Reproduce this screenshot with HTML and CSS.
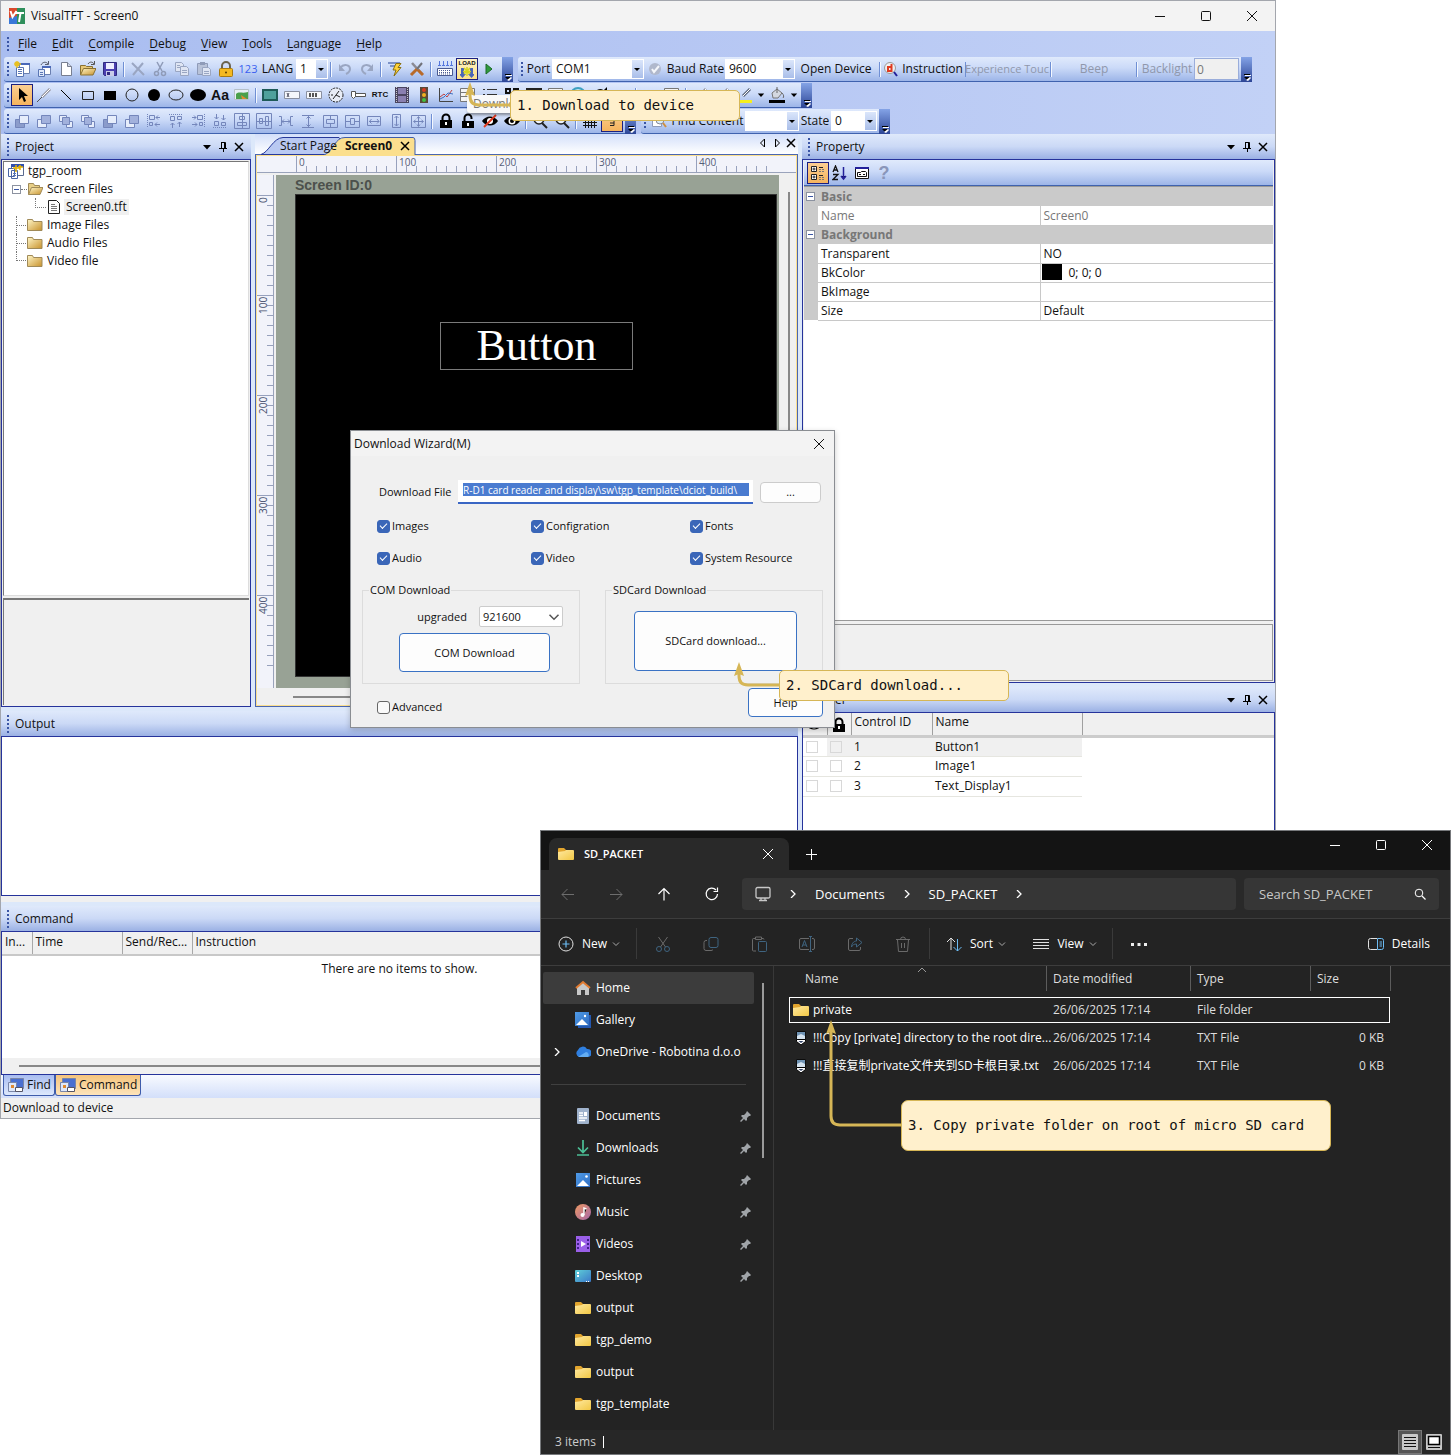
FILE: index.html
```html
<!DOCTYPE html>
<html lang="en">
<head>
<meta charset="utf-8">
<meta name="viewport" content="width=device-width, initial-scale=1">
<title>VisualTFT - Screen0</title>
<link rel="stylesheet" href="styles.css">
</head>
<body>
<svg class="sprite" aria-hidden="true">
  <defs>
    <linearGradient id="gFolder" x1="0" y1="0" x2="1" y2="1"><stop offset="0" stop-color="#ffe9a0"/><stop offset="1" stop-color="#f2c744"/></linearGradient>
    <linearGradient id="gBlue" x1="0" y1="0" x2="1" y2="1"><stop offset="0" stop-color="#4f9be8"/><stop offset="1" stop-color="#2f6cc0"/></linearGradient>
    <linearGradient id="gMusic" x1="0" y1="0" x2="1" y2="1"><stop offset="0" stop-color="#ee9a63"/><stop offset="1" stop-color="#a566a8"/></linearGradient>
    <linearGradient id="gDesk" x1="0" y1="0" x2="1" y2="1"><stop offset="0" stop-color="#5fd0d8"/><stop offset="1" stop-color="#3b78c8"/></linearGradient>
    <linearGradient id="gOld" x1="0" y1="0" x2="1" y2="1"><stop offset="0" stop-color="#fff6c8"/><stop offset="1" stop-color="#c8922c"/></linearGradient>
  </defs>
  <symbol id="logo" viewBox="0 0 16 16"><path fill="#d9482b" d="M0 0h8v10H0z"/><path fill="#2f8f5b" d="M8 0h8v16H8z"/><path fill="#3a78d8" d="M0 10l8-2v8H0z"/><path fill="none" stroke="#fff" stroke-width="2" d="M1.500 3l2 6 4-6M6 5h9M11.500 5l-1.500 9"/></symbol>
  <symbol id="newproj" viewBox="0 0 16 16"><path fill="#fff" stroke="#6a7fb0" d="M5.500 2.500h10v10h-10z"/><path fill="#4a68b8" d="M5 2h11v2H5z"/><path fill="#fff" stroke="#5a76b4" d="M2.500 6.500h7v9h-7z"/><path stroke="#5a76b4" d="M4 8.500h4M4 10.500h4M4 12.500h4"/><path stroke="#e8c020" stroke-width="1.500" d="M3 0v7M0 3h7M1 1l4 4M5 1L1 5"/></symbol>
  <symbol id="newwin" viewBox="0 0 16 16"><path fill="#fff" stroke="#6a7fb0" d="M6.500 6.500h8v7h-8z"/><path fill="#4a68b8" d="M6 5h9v2H6z"/><path fill="#dfe8fa" stroke="#5a76b4" d="M2.500 8.500h6v7h-6z"/><path stroke="#5a76b4" d="M4 11.500h3M4 13.500h3"/><path fill="none" stroke="#5a5f70" d="M5 4c2-4 6-3 7-1M12.500 0v3.500H9"/></symbol>
  <symbol id="page" viewBox="0 0 16 16"><path fill="#fff" stroke="#777e90" d="M3.500 1.500h6l4 4v9h-10z"/><path fill="#cfd6e6" stroke="#777e90" d="M9.500 1.500v4h4"/></symbol>
  <symbol id="open" viewBox="0 0 16 16"><path fill="#e7c877" stroke="#8a7233" d="M.500 13.500v-9h5l1 1h6v3"/><path fill="url(#gOld)" stroke="#8a7233" d="M.500 14l3-6.500H16L13 14z"/><path fill="none" stroke="#555" d="M8 3c2-3 5-2 6 0M14.500 0v3.500H11"/></symbol>
  <symbol id="save" viewBox="0 0 16 16"><path fill="#4a3fb0" stroke="#302a80" d="M1.500 1.500h13v13h-12l-1-1z"/><path fill="#eef" d="M4 2h8v6H4z"/><path fill="#c8cbe8" d="M4 10h8v5H4z"/><path fill="#302a80" d="M5 11h3v3H5z"/></symbol>
  <symbol id="del" viewBox="0 0 16 16"><path fill="none" stroke="#9aa6c2" stroke-width="2" d="M2 2l12 12M13 2L3 14"/></symbol>
  <symbol id="scis" viewBox="0 0 16 16"><path fill="none" stroke="#8f9bb8" stroke-width="1.500" d="M5 1l5 9M11 1L6 10"/><circle cx="4.500" cy="12.500" r="2" fill="none" stroke="#8f9bb8" stroke-width="1.500"/><circle cx="11.500" cy="12.500" r="2" fill="none" stroke="#8f9bb8" stroke-width="1.500"/></symbol>
  <symbol id="copy" viewBox="0 0 16 16"><path fill="#dfe5f3" stroke="#9aa6c2" d="M1.500 1.500h6l2 2v7h-8z"/><path fill="#dfe5f3" stroke="#9aa6c2" d="M6.500 5.500h6l2 2v7h-8z"/><path stroke="#9aa6c2" d="M8 9.500h5M8 11.500h5M3 4.500h3M3 6.500h3"/></symbol>
  <symbol id="paste" viewBox="0 0 16 16"><path fill="#b8c2d8" stroke="#8f9bb8" d="M1.500 2.500h10v11h-10z"/><path fill="#8f9bb8" d="M4 1h5v3H4z"/><path fill="#dfe5f3" stroke="#9aa6c2" d="M6.500 6.500h6l2 2v6h-8z"/><path stroke="#9aa6c2" d="M8 10.500h5M8 12.500h5"/></symbol>
  <symbol id="goldlock" viewBox="0 0 16 16"><path fill="none" stroke="#6b6450" stroke-width="2" d="M4 8V5a4 4 0 0 1 8 0v3"/><rect x="1.500" y="7.500" width="13" height="8" rx="1" fill="#f5b921" stroke="#a87a10"/><circle cx="8" cy="11.500" r="1" fill="#5a3c00"/></symbol>
  <symbol id="undo" viewBox="0 0 16 16"><path fill="none" stroke="#9aa6c2" stroke-width="2" d="M3 7c4-5 10-3 10 1 0 3-2 4-4 5"/><path fill="#9aa6c2" d="M2 3v7h6z"/></symbol>
  <symbol id="redo" viewBox="0 0 16 16"><path fill="none" stroke="#9aa6c2" stroke-width="2" d="M13 7c-4-5-10-3-10 1 0 3 2 4 4 5"/><path fill="#9aa6c2" d="M14 3v7H8z"/></symbol>
  <symbol id="bolt" viewBox="0 0 16 16"><path fill="none" stroke="#5f78b8" stroke-width="1.500" d="M1 2h12M3 5h6"/><path fill="#ffd23a" stroke="#8a7010" d="M9 2.500h5l-3 4h3L7 15l2-6H6z"/></symbol>
  <symbol id="tools" viewBox="0 0 16 16"><path stroke="#8a8a94" stroke-width="2.500" d="M3 2l10 11"/><path stroke="#b86a2a" stroke-width="3" d="M2 14l6-6M9 9l5 5"/><path stroke="#70727a" stroke-width="2" d="M8 8l5-6"/></symbol>
  <symbol id="compile" viewBox="0 0 16 16"><path fill="#fff" stroke="#4a5a90" d="M.500 7.500h15v7H.500z"/><path stroke="#4a5a90" stroke-dasharray="1 1" d="M2 9.500h12M2 11.500h12M2 13h12"/><path stroke="#5577dd" d="M2.500 0v5M6.500 0v5M10.500 0v5M14.500 0v5M1 4.500h3M5 4.500h3M9 4.500h3M13 4.500h3"/></symbol>
  <symbol id="load" viewBox="2 6 14 12"><path fill="#4a66b8" d="M3 7h3v6h2l-3.500 4L1 13h2zM12 7h3v6h2l-3.500 4-3.500-4h2z"/><path stroke="#d4d420" stroke-width="1.500" d="M9 6v9M5 10.500h8M6 7l6 6M12 7l-6 6"/></symbol>
  <symbol id="play" viewBox="0 0 16 16"><path fill="#2f9a3c" stroke="#1d6b28" d="M5 3l6 5-6 5z"/></symbol>
  <symbol id="okball" viewBox="0 0 16 16"><circle cx="8" cy="8" r="6" fill="#b0b8cc"/><path fill="none" stroke="#f4f6fa" stroke-width="2" d="M5 8l2 3 5-6"/></symbol>
  <symbol id="redmag" viewBox="0 0 16 16"><circle cx="7" cy="7" r="5.500" fill="#f0eef0" stroke="#999"/><path stroke="#23209a" stroke-width="2" d="M11 11l3 4"/><path fill="none" stroke="#e03a20" stroke-width="2" d="M8.500 3v8M8 6H5v4h3"/></symbol>

  <symbol id="cursor" viewBox="0 0 16 16"><path d="M5 1v12l3-3 2 5 2-1-2-5h4z"/></symbol>
  <symbol id="pen" viewBox="0 0 16 16"><path stroke="#9a9aa4" stroke-width="3" d="M6 10l8-8"/><path stroke="#fff" d="M6 10l8-8"/><path stroke="#555" d="M1 15l5-5"/></symbol>
  <symbol id="line" viewBox="0 0 16 16"><path stroke="#000" d="M3 3l10 10"/></symbol>
  <symbol id="rect" viewBox="0 0 16 16"><path fill="none" stroke="#222" d="M2.500 4.500h11v8h-11z"/></symbol>
  <symbol id="rectf" viewBox="0 0 16 16"><path d="M2 4h12v9H2z"/></symbol>
  <symbol id="circ" viewBox="0 0 16 16"><circle cx="8" cy="8" r="6" fill="none" stroke="#222"/></symbol>
  <symbol id="circf" viewBox="0 0 16 16"><circle cx="8" cy="8" r="6"/></symbol>
  <symbol id="ell" viewBox="0 0 16 16"><ellipse cx="8" cy="8" rx="7" ry="5" fill="none" stroke="#222"/></symbol>
  <symbol id="ellf" viewBox="0 0 16 16"><ellipse cx="8" cy="8" rx="8" ry="6"/></symbol>
  <symbol id="img" viewBox="0 0 16 16"><path fill="#e8f0f4" stroke="#b5c0c8" d="M.500 2.500h14v10H.500z"/><path fill="#4aa04a" d="M2 7c3-3 6 0 12-2v7H2z"/><path fill="#e08a30" d="M7 8l6 4H8z"/></symbol>
  <symbol id="teal" viewBox="0 0 16 16"><path fill="#4fa09c" stroke="#1e5a58" stroke-width="2" d="M1 3h14v10H1z"/></symbol>
  <symbol id="edit" viewBox="0 0 16 16"><path fill="#f6f8fc" stroke="#8a90a0" d="M.500 4.500h15v7H.500z"/><path stroke="#556" d="M3 6l2 4M5 6l-2 4"/></symbol>
  <symbol id="bars" viewBox="0 0 16 16"><path fill="#f6f8fc" stroke="#8a90a0" d="M.500 4.500h15v7H.500z"/><path stroke="#555" stroke-width="2" d="M4 6v4M7 6v4M10 6v4"/></symbol>
  <symbol id="clock" viewBox="0 0 16 16"><circle cx="8" cy="8" r="7" fill="#e8edf6" stroke="#222" stroke-dasharray="2 1"/><path stroke="#222" d="M5 12l6-8M8 8l4 2M3 8h2"/></symbol>
  <symbol id="slider" viewBox="0 0 16 16"><path fill="#fff" stroke="#555" d="M5.500 6.500h10v3h-10zM1.500 4.500h4v5l-2 2-2-2z"/></symbol>
  <symbol id="film" viewBox="0 0 16 16"><path fill="#4a4560" d="M1 0h14v16H1z"/><path fill="#8a80b0" d="M4 1h8v6H4zM4 9h8v6H4z"/><path stroke="#ccc" stroke-dasharray="1 1" d="M2.500 0v16M13.500 0v16"/></symbol>
  <symbol id="traffic" viewBox="0 0 16 16"><rect x="4" y="0" width="8" height="16" fill="#5a4a38"/><circle cx="8" cy="3" r="2" fill="#d83a20"/><circle cx="8" cy="8" r="2" fill="#f0b020"/><circle cx="8" cy="13" r="2" fill="#40c040"/></symbol>
  <symbol id="chart" viewBox="0 0 16 16"><path fill="none" stroke="#444" d="M1.500 1v13.500H15"/><path fill="none" stroke="#c04040" d="M2 10l4-3 3 3 5-7"/><path fill="none" stroke="#4070c0" d="M2 12l4-2 4-4 5 1"/></symbol>
  <symbol id="listbox" viewBox="0 0 16 16"><path fill="#f4f4f4" stroke="#777" d="M.500 1.500h14v13H.500z"/><path stroke="#777" d="M1 5.500h13M1 9.500h13"/></symbol>
  <symbol id="lines" viewBox="0 0 16 16"><path stroke="#333" d="M5 2.500h10M5 7.500h10M5 12.500h10M1 2.500h2M1 7.500h2M1 12.500h2"/></symbol>
  <symbol id="qr" viewBox="0 0 16 16"><path fill="none" stroke="#111" stroke-width="2" d="M2 2h4v4H2zM10 2h4v4h-4zM2 10h4v4H2z"/><path stroke="#111" stroke-dasharray="2 1" d="M9 9.500h6M9 12.500h6"/></symbol>
  <symbol id="darkbox" viewBox="0 0 16 16"><path fill="none" stroke="#222" stroke-width="2" d="M1 2h14v12H1zM8 2v12"/></symbol>
  <symbol id="globe" viewBox="0 0 16 16"><circle cx="8" cy="8" r="7" fill="#bfe4f0" stroke="#3fa0c0" stroke-width="2"/></symbol>
  <symbol id="rot" viewBox="0 0 16 16"><path fill="none" stroke="#111" stroke-width="2" d="M13 9a5 5 0 1 1-2-5"/><path d="M10 5h5V0z"/></symbol>
  <symbol id="mark" viewBox="0 0 16 16"><path stroke="#5f6a80" stroke-width="3" d="M7 9l7-7"/><path stroke="#fff" d="M7 9l7-7"/><path stroke="#f6ee20" stroke-width="3" d="M2 14.500h14"/></symbol>
  <symbol id="bucket" viewBox="0 0 16 16"><path fill="#d4d8e0" stroke="#777" d="M3 6l5-4 5 4-4 5H4z"/><path fill="none" stroke="#666" d="M8 6V0M13 6c2 2 2 4 1 5"/><path stroke="#000" stroke-width="3" d="M0 14.500h16"/></symbol>

  <symbol id="lay1" viewBox="0 0 16 16"><path fill="#8b9ccb" stroke="#7486bb" d="M1.500 6.500h9v8h-9z"/><path fill="#e6edfb" stroke="#7486bb" d="M5.500 2.500h9v8h-9z"/></symbol>
  <symbol id="lay2" viewBox="0 0 16 16"><path fill="#e6edfb" stroke="#7486bb" d="M1.500 6.500h9v8h-9z"/><path fill="#a2b1dc" stroke="#7486bb" d="M5.500 2.500h9v8h-9z"/></symbol>
  <symbol id="lay3" viewBox="0 0 16 16"><path fill="#e6edfb" stroke="#7486bb" d="M1.500 2.500h7v6h-7zM8.500 8.500h6v6h-6z"/><path fill="#a2b1dc" stroke="#7486bb" d="M4.500 4.500h7v7h-7z"/></symbol>
  <symbol id="alL" viewBox="0 0 16 16"><path fill="none" stroke="#7486bb" d="M3.500 2.500h5v4h-5zM3.500 9.500h3v3h-3zM14 4.500h-4m2-2l-2 2 2 2M14 11.500H9m2-2l-2 2 2 2"/><path stroke="#7486bb" stroke-dasharray="1 1" d="M1.500 1v14"/></symbol>
  <symbol id="alT" viewBox="0 0 16 16"><path fill="none" stroke="#7486bb" d="M2.500 3.500h4v4h-4zM9.500 3.500h4v3h-4zM4.500 15v-5m-2 2l2-2 2 2M11.500 14V9m-2 2l2-2 2 2"/><path stroke="#7486bb" stroke-dasharray="1 1" d="M1 1.500h14"/></symbol>
  <symbol id="cenH" viewBox="0 0 16 16"><path fill="none" stroke="#7486bb" d="M.500.500h15v15H.500zM5.500 3.500h5v3h-5zM3.500 9.500h9v3h-9zM8.500 1v14"/></symbol>
  <symbol id="cenV" viewBox="0 0 16 16"><path fill="none" stroke="#7486bb" d="M.500.500h15v15H.500zM3.500 5.500h3v5h-3zM9.500 3.500h3v9h-3zM1 8.500h14"/></symbol>
  <symbol id="spH" viewBox="0 0 16 16"><path fill="none" stroke="#7486bb" d="M1 3.500h2.500v9H1M15 3.500h-2.500v9H15M4 8.500h8M6 6.500l-2 2 2 2M10 6.500l2 2-2 2"/></symbol>
  <symbol id="spV" viewBox="0 0 16 16"><path fill="none" stroke="#7486bb" d="M2 2.500h12M2 14.500h12M8.500 3v11M6.500 5.500l2-2 2 2M6.500 11.500l2 2 2-2"/></symbol>
  <symbol id="boxV" viewBox="0 0 16 16"><path fill="none" stroke="#7486bb" d="M1.500 2.500h14v12h-14zM4.500 6.500h8v4h-8zM8.500 3v3M8.500 11v3"/></symbol>
  <symbol id="boxH" viewBox="0 0 16 16"><path fill="none" stroke="#7486bb" d="M1.500 2.500h14v12h-14zM6.500 5.500h4v6h-4zM2 8.500h4M11 8.500h4"/></symbol>
  <symbol id="wid" viewBox="0 0 16 16"><path fill="none" stroke="#7486bb" d="M1.500 3.500h13v9h-13zM3 8.500h10M5.500 6l-2 2.500 2 2M11 6l2 2.500-2 2"/></symbol>
  <symbol id="hei" viewBox="0 0 16 16"><path fill="none" stroke="#7486bb" d="M4.500 1.500h8v13h-8zM8.500 3v10M6.500 5l2-2 2 2M6.500 11l2 2 2-2"/></symbol>
  <symbol id="all" viewBox="0 0 16 16"><path fill="none" stroke="#7486bb" d="M1.500 2.500h14v12h-14zM8.500 4v9M4 8.500h9M7 5.500l1.500-2 1.500 2M7 11.500l1.500 2 1.500-2M5.500 7l-2 1.500 2 1.500M11.500 7l2 1.500-2 1.500"/></symbol>
  <symbol id="lock" viewBox="0 0 16 16"><path fill="none" stroke="#000" stroke-width="2" d="M4.500 8V5a3.500 3.500 0 0 1 7 0v3"/><path d="M2 7h12v8H2z"/><path stroke="#fff" stroke-width="2" d="M8 9v3"/></symbol>
  <symbol id="unlock" viewBox="0 0 16 16"><path fill="none" stroke="#000" stroke-width="2" d="M4.500 8V5a3.500 3.500 0 0 1 7 0v1"/><path d="M2 8h12v7H2z"/><path stroke="#fff" stroke-width="2" d="M8 10v3"/></symbol>
  <symbol id="eye" viewBox="0 0 16 16"><path d="M0 8c4-6 12-6 16 0-4 6-12 6-16 0z"/><circle cx="8" cy="8" r="3.500" fill="#fff"/><circle cx="8" cy="8" r="2"/></symbol>
  <symbol id="eyeoff" viewBox="0 0 16 16"><path d="M0 8c4-6 12-6 16 0-4 6-12 6-16 0z"/><circle cx="8" cy="8" r="3" fill="#fff"/><path stroke="#e03a20" stroke-width="2" d="M2 14L14 2"/></symbol>
  <symbol id="mag" viewBox="0 0 16 16"><circle cx="7" cy="6" r="5" fill="#eef3fc" stroke="#222" stroke-width="1.500"/><path stroke="#222" stroke-width="2" d="M10 10l5 5"/></symbol>
  <symbol id="grid" viewBox="0 0 16 16"><path stroke="#111" d="M3.500 1v14M6.500 1v14M9.500 1v14M12.500 1v14M1 3.500h14M1 6.500h14M1 9.500h14M1 12.500h14"/></symbol>
  <symbol id="snap" viewBox="0 0 16 16"><path fill="none" stroke="#222" d="M6 7.500h4v5H6M6 10h4M2 1.500h12"/></symbol>
  <symbol id="find" viewBox="0 0 16 16"><path fill="#fff" stroke="#8f9bb8" d="M1.500 3.500h9v10h-9z"/><circle cx="9" cy="7" r="4" fill="#d8ecf8" stroke="#889"/><path stroke="#d09040" stroke-width="2" d="M12 10l3 4"/></symbol>

  <symbol id="tri" viewBox="0 0 10 10"><path d="M1 3h8L5 7.500z"/></symbol>
  <symbol id="pin" viewBox="0 0 10 10"><path fill="none" stroke="#000" d="M3 .500h4.500V6M3.500 .500V6M1 6.500h8M5.500 7v3M6.500 1v5"/></symbol>
  <symbol id="x" viewBox="0 0 10 10"><path stroke="#000" stroke-width="1.500" d="M1 1l8 8M9 1L1 9"/></symbol>
  <symbol id="ofl" viewBox="0 0 10 14"><path stroke="#000" d="M2 7.500h6"/><path stroke="#fff" d="M3 8.500h6"/><path fill="#000" d="M2 10h6l-3 3z"/><path fill="#fff" d="M4 13l4-3 1 1-3 3z"/></symbol>
  <symbol id="proj" viewBox="0 0 16 16"><path fill="#fff" stroke="#5a6a90" d="M3.500 1.500h12v11h-12z"/><path fill="#2f4fae" d="M3 1h13v3H3z"/><path fill="#fff" stroke="#4a66a4" d="M.500 5.500h6v8h-6zM3.500 7.500h6v8h-6z"/><path stroke="#5a76b4" d="M5 10.500h3M5 12.500h3"/><path stroke="#e8b400" stroke-width="1.500" d="M8 2v7M5 5h7M12 2v5M10 4h5"/></symbol>
  <symbol id="fold" viewBox="0 0 16 16"><path fill="url(#gOld)" stroke="#a08a58" d="M.500 13.500v-11h5l1 2h8.500v9z"/></symbol>
  <symbol id="foldo" viewBox="0 0 16 16"><path fill="#e8cf86" stroke="#a08a58" d="M1.500 13.500v-11h5l1 2h5v4"/><path fill="url(#gOld)" stroke="#a08a58" d="M1.500 13.500l3-7H16l-3 7z"/></symbol>
  <symbol id="doc" viewBox="0 0 14 16"><path fill="#fff" stroke="#222" d="M1.500 1.500h8l3 3v10h-11z"/><path stroke="#777" d="M4 5.500h4M4 7.500h6M4 9.500h6M4 11.500h6"/></symbol>
  <symbol id="cat" viewBox="0 0 18 18"><path fill="#fff" stroke="#222" d="M2.500 2.500h5v5h-5zM2.500 10.500h5v5h-5z"/><path stroke="#222" d="M3.500 5h3M5 3.500v3M3.500 13h3M5 11.500v3M10 3.500h4M10 11.500h4"/><path stroke="#777" d="M10 5.500h2m1 0h2M10 7.500h2m1 0h2M10 13.500h2m1 0h2M10 15.500h2m1 0h2"/></symbol>
  <symbol id="az" viewBox="0 0 16 16"><path fill="none" stroke="#111" stroke-width="1.300" d="M1 7l2.500-6L6 7M2 5h3M1 9.500h5l-5 5h5"/><path stroke="#23209a" stroke-width="1.500" d="M11.500 2v12M9 11l2.500 3 2.500-3"/></symbol>
  <symbol id="cards" viewBox="0 0 16 16"><path fill="#fff" stroke="#111" d="M1.500 2.500h13v11h-13z"/><path fill="#23209a" d="M1 2h14v2H1z"/><path fill="none" stroke="#111" d="M3.500 7.500h3l1-1h4l1 1v4h-9zM5 9.500h2M9 9.500h2"/></symbol>
  <symbol id="tabi" viewBox="0 0 16 16"><path fill="#4a6fd0" stroke="#7a86a8" d="M2.500 1.500h13v10h-13z"/><path fill="#dfe8fa" stroke="#7a86a8" d="M.500 5.500h8v9h-8z"/><path fill="#e08a30" d="M3 8h3v3H3z"/><path fill="#fff" stroke="#556" d="M7.500 10.500h7v4h-7z"/></symbol>

  <symbol id="wmin" viewBox="0 0 12 12"><path stroke="currentColor" d="M1 6.500h10"/></symbol>
  <symbol id="wmax" viewBox="0 0 12 12"><rect x="1.500" y="1.500" width="9" height="9" rx="1" fill="none" stroke="currentColor"/></symbol>
  <symbol id="wx" viewBox="0 0 12 12"><path stroke="currentColor" d="M1 1l10 10M11 1L1 11"/></symbol>

  <symbol id="yf" viewBox="0 0 16 16"><path fill="#e2a52e" d="M0 3a1 1 0 0 1 1-1h5l2 2v3H0z"/><path fill="url(#gFolder)" d="M0 6l7-1 1-1h7a1 1 0 0 1 1 1v8a1 1 0 0 1-1 1H1a1 1 0 0 1-1-1z"/></symbol>
  <symbol id="home" viewBox="0 0 16 16"><path fill="#c8c8c8" d="M2 7l6-5 6 5v8h-4v-5H6v5H2z"/><path fill="none" stroke="#e07a30" stroke-width="2" d="M1 8l7-6 7 6"/></symbol>
  <symbol id="gal" viewBox="0 0 16 16"><path fill="#2458b0" d="M3 3h13v13H3z"/><path fill="url(#gBlue)" d="M0 0h14v14H0z"/><path fill="#fff" d="M1 13l6-6 6 6z"/><circle cx="10" cy="4" r="1.200" fill="#fff"/></symbol>
  <symbol id="cloud" viewBox="0 0 16 16"><path fill="#2f7fe0" d="M4 13a4 4 0 0 1-1-7 5 5 0 0 1 9-1 4 4 0 0 1 1 8z"/><path fill="#64aef4" d="M3 13l8-5a3 3 0 0 1 2 5z"/></symbol>
  <symbol id="sdoc" viewBox="0 0 16 16"><rect x="2" y="0" width="12" height="16" rx="1" fill="#9fb2cc"/><path stroke="#fff" stroke-width="1.300" d="M4 5h4M4 7.500h4M4 10h8M4 12.500h6"/><path fill="#fff" d="M9 4h3v4H9z"/></symbol>
  <symbol id="dl" viewBox="0 0 16 16"><path fill="none" stroke="#4cbf96" stroke-width="1.700" d="M8 0v12M3 7.500l5 5 5-5M2 15h12"/></symbol>
  <symbol id="pic" viewBox="0 0 16 16"><path fill="url(#gBlue)" d="M1 1h14v14H1z"/><path fill="#fff" d="M2 14l6-6 6 6z"/><circle cx="11.500" cy="4.500" r="1.300" fill="#fff"/></symbol>
  <symbol id="mus" viewBox="0 0 16 16"><circle cx="8" cy="8" r="8" fill="url(#gMusic)"/><path stroke="#fff" stroke-width="1.500" d="M9 11V4l2.500 1"/><circle cx="7.500" cy="11" r="2" fill="#fff"/></symbol>
  <symbol id="vid" viewBox="0 0 16 16"><path fill="#9a5fe8" d="M1 0h14v16H1z"/><path stroke="#40208a" stroke-width="2" stroke-dasharray="2 2" d="M3 3v12M13 3v12"/><path fill="#fff" d="M6 5l5 3-5 3z"/></symbol>
  <symbol id="desk" viewBox="0 0 16 16"><rect x="0" y="2" width="16" height="12" rx="1" fill="url(#gDesk)"/><path stroke="#fff" stroke-width="2" stroke-dasharray="2 1" d="M3 4v6"/><path stroke="#fff" stroke-dasharray="1 1" d="M11 13.500h4"/></symbol>
  <symbol id="spin" viewBox="0 0 12 12"><path fill="#a0a4a8" d="M7 1l4 4-1 1-1 0-2 2 0 2-1 1-2-2-3 3-1-1 3-3-2-2 1-1h2l2-2z"/></symbol>
  <symbol id="txt" viewBox="0 0 12 16"><path fill="#6f93b4" stroke="#0c0c0c" d="M1.500 1.500h9v8h-9z"/><path fill="#d4e2ee" d="M2 6l4-2 4 2v4H2z"/><path fill="#fff" stroke="#000" d="M1.500 9.500h9v2L6 15l-4.500-3.500z"/><path fill="#346" d="M3.500 11h5L6 13z"/></symbol>
  <symbol id="left" viewBox="0 0 16 16"><path fill="none" stroke="currentColor" d="M14 8.500H2M7.500 3l-5.500 5.500L7.500 14"/></symbol>
  <symbol id="right" viewBox="0 0 16 16"><path fill="none" stroke="currentColor" d="M2 8.500h12M8.500 3L14 8.500 8.500 14"/></symbol>
  <symbol id="up" viewBox="0 0 16 16"><path fill="none" stroke="currentColor" stroke-width="1.200" d="M8 14.500V2.500M2.500 8L8 2.500 13.500 8"/></symbol>
  <symbol id="ref" viewBox="0 0 16 16"><path fill="none" stroke="currentColor" stroke-width="1.200" d="M13.500 8A5.700 5.700 0 1 1 12 4M13.500 1.500v4h-4"/></symbol>
  <symbol id="mon" viewBox="0 0 16 16"><rect x="1" y="1.500" width="14" height="10.500" rx="1.500" fill="none" stroke="#c8c8c8" stroke-width="1.300"/><path stroke="#c8c8c8" stroke-width="1.300" d="M4 14.500h8M6 12v2M10 12v2"/></symbol>
  <symbol id="chev" viewBox="0 0 8 8"><path fill="none" stroke="currentColor" stroke-width="1.300" d="M2 0l4 4-4 4"/></symbol>
  <symbol id="chd" viewBox="0 0 8 8"><path fill="none" stroke="currentColor" d="M1 2.500l3 3 3-3"/></symbol>
  <symbol id="chu" viewBox="0 0 8 8"><path fill="none" stroke="currentColor" d="M0 6l4-4 4 4"/></symbol>
  <symbol id="smag" viewBox="0 0 12 12"><circle cx="5" cy="5" r="3.800" fill="none" stroke="currentColor"/><path stroke="currentColor" stroke-width="1.200" d="M8 8l3.500 3.500"/></symbol>
  <symbol id="plusc" viewBox="0 0 16 16"><circle cx="8" cy="8" r="7" fill="none" stroke="#e0e0e0"/><path stroke="#6cbcf4" stroke-width="1.200" d="M8 4.500v7M4.500 8h7"/></symbol>
  <symbol id="ecut" viewBox="0 0 16 16"><path fill="none" stroke="#6a6a6a" d="M3.500 1l7 10M12.500 1l-7 10"/><circle cx="4" cy="13" r="2.500" fill="none" stroke="#3f6480"/><circle cx="12" cy="13" r="2.500" fill="none" stroke="#3f6480"/></symbol>
  <symbol id="ecopy" viewBox="0 0 16 16"><rect x="6" y="1.500" width="9" height="10" rx="2" fill="none" stroke="#3f6480"/><path fill="none" stroke="#6a6a6a" d="M4 4.500H3a2 2 0 0 0-2 2v6a2 2 0 0 0 2 2h5a2 2 0 0 0 2-1"/></symbol>
  <symbol id="epaste" viewBox="0 0 16 16"><path fill="none" stroke="#6a6a6a" d="M5 15H2.500a1 1 0 0 1-1-1V3.500a1 1 0 0 1 1-1H5M10 2.500h2a1 1 0 0 1 1 1M4.500 1h6v2.500h-6z"/><rect x="7.500" y="5.500" width="8" height="10" rx="1" fill="none" stroke="#3f6480"/></symbol>
  <symbol id="eren" viewBox="0 0 16 16"><path fill="none" stroke="#6a6a6a" d="M10 2.500H2a1.500 1.500 0 0 0-1.500 1.500v8A1.500 1.500 0 0 0 2 13.500h8M13 2.500h1A1.500 1.500 0 0 1 15.500 4v8a1.500 1.500 0 0 1-1.500 1.500h-1"/><path fill="none" stroke="#3f6480" d="M11.500.500v15M10 .500h3M10 15.500h3M3 11l2.500-6.500L8 11M4 9h3"/></symbol>
  <symbol id="eshare" viewBox="0 0 16 16"><path fill="none" stroke="#6a6a6a" d="M6 2.500H3a1.500 1.500 0 0 0-1.500 1.500v9A1.500 1.500 0 0 0 3 14.500h9a1.500 1.500 0 0 0 1.500-1.500v-2"/><path fill="none" stroke="#3f6480" d="M9.500 5V2l5.500 4.500L9.500 11V8C7 8 5.500 9 4.500 11c0-3 2-6 5-6z"/></symbol>
  <symbol id="ebin" viewBox="0 0 16 16"><path fill="none" stroke="#6a6a6a" d="M1 3.500h14M5.500 3.500a2.500 2.500 0 0 1 5 0M2.500 4l1 11.500h9l1-11.500M6.500 7v5M9.500 7v5"/></symbol>
  <symbol id="esort" viewBox="0 0 16 16"><path fill="none" stroke="#e0e0e0" d="M5 14V2M1 6l4-4 4 4"/><path fill="none" stroke="#6cbcf4" d="M11.500 3v12M7.500 11l4 4 4-4"/></symbol>
  <symbol id="eview" viewBox="0 0 16 16"><path stroke="#e0e0e0" d="M0 3.500h16M0 6.500h16M0 9.500h16M0 12.500h16"/></symbol>
  <symbol id="edet" viewBox="0 0 16 16"><path fill="none" stroke="#e0e0e0" d="M9 2.500H2.500a2 2 0 0 0-2 2v7a2 2 0 0 0 2 2H9"/><path fill="none" stroke="#6cbcf4" d="M9.500 2.500h4a2 2 0 0 1 2 2v7a2 2 0 0 1-2 2h-4zM11.500 6h2.500M11.500 8h2.500M11.500 10h2.500"/></symbol>
  <symbol id="vlist" viewBox="0 0 16 16"><rect width="16" height="16" rx="1" fill="#c8c8c8"/><path stroke="#111" d="M2 3.500h12M2 6.500h12M2 9.500h12M2 12.500h12"/></symbol>
  <symbol id="vbig" viewBox="0 0 16 16"><rect width="16" height="16" rx="1" fill="#c8c8c8"/><path fill="#fff" stroke="#000" stroke-width="1.500" d="M2.500 2.500h11v8h-11z"/><path stroke="#111" d="M2 13.500h12"/></symbol>
</svg>

<div class="desktop">
<main class="ide">
  <header class="titlebar">
    <svg class="i16"><use href="#logo"/></svg><h1>VisualTFT - Screen0</h1>
    <div class="winbtns"><button aria-label="Minimize"><svg><use href="#wmin"/></svg></button><button aria-label="Maximize"><svg><use href="#wmax"/></svg></button><button aria-label="Close"><svg><use href="#wx"/></svg></button></div>
  </header>
  <nav class="menubar"><i class="grip"></i><a href="#file"><u>F</u>ile</a><a href="#edit"><u>E</u>dit</a><a href="#compile"><u>C</u>ompile</a><a href="#debug"><u>D</u>ebug</a><a href="#view"><u>V</u>iew</a><a href="#tools"><u>T</u>ools</a><a href="#language"><u>L</u>anguage</a><a href="#help"><u>H</u>elp</a></nav>

  <div class="barrow">
    <div class="bar">
      <i class="grip"></i>
      <button aria-label="New project"><svg><use href="#newproj"/></svg></button><button aria-label="New window"><svg><use href="#newwin"/></svg></button><button aria-label="New"><svg><use href="#page"/></svg></button><button aria-label="Open"><svg><use href="#open"/></svg></button><button aria-label="Save"><svg><use href="#save"/></svg></button><i class="sep"></i>
      <button aria-label="Delete"><svg><use href="#del"/></svg></button><button aria-label="Cut"><svg><use href="#scis"/></svg></button><button aria-label="Copy"><svg><use href="#copy"/></svg></button><button aria-label="Paste"><svg><use href="#paste"/></svg></button><button aria-label="Lock"><svg><use href="#goldlock"/></svg></button><button class="num">123</button>
      <label class="lang" for="lang">LANG</label><span class="combo w32"><select id="lang"><option>1</option></select></span><i class="sep"></i>
      <button aria-label="Undo"><svg><use href="#undo"/></svg></button><button aria-label="Redo"><svg><use href="#redo"/></svg></button><i class="sep"></i>
      <button aria-label="Run"><svg><use href="#bolt"/></svg></button><button aria-label="Settings"><svg><use href="#tools"/></svg></button><i class="sep"></i>
      <button aria-label="Compile"><svg><use href="#compile"/></svg></button><button class="on load"><span>LOAD</span><svg><use href="#load"/></svg></button><button aria-label="Play"><svg><use href="#play"/></svg></button>
      <button class="ofl" aria-label="More"><svg><use href="#ofl"/></svg></button>
    </div>
    <div class="bar">
      <i class="grip"></i><label class="w27" for="port">Port</label><span class="combo w92"><select id="port"><option>COM1</option></select></span>
      <button aria-label="Connect"><svg><use href="#okball"/></svg></button><label class="w59" for="baud">Baud Rate</label><span class="combo w70"><select id="baud"><option>9600</option></select></span>
      <button class="tx w82">Open Device</button><i class="sep"></i><button class="tx w80"><svg><use href="#redmag"/></svg>Instruction</button><i class="sep tight"></i><button class="tx dim small w82" disabled>Experience Touc</button><i class="sep"></i><button class="tx dim w80" disabled>Beep</button><i class="sep"></i><label class="dim w54" for="bl">Backlight</label><input id="bl" class="blight" value="0" disabled>
      <button class="ofl" aria-label="More"><svg><use href="#ofl"/></svg></button>
    </div>
  </div>

  <div class="barrow">
    <div class="bar">
      <i class="grip"></i>
      <button class="on" aria-label="Select"><svg><use href="#cursor"/></svg></button><button aria-label="Pen"><svg><use href="#pen"/></svg></button><button aria-label="Line"><svg><use href="#line"/></svg></button><button aria-label="Rectangle"><svg><use href="#rect"/></svg></button><button aria-label="Filled rectangle"><svg><use href="#rectf"/></svg></button><button aria-label="Circle"><svg><use href="#circ"/></svg></button><button aria-label="Filled circle"><svg><use href="#circf"/></svg></button><button aria-label="Ellipse"><svg><use href="#ell"/></svg></button><button aria-label="Filled ellipse"><svg><use href="#ellf"/></svg></button><button class="aa">Aa</button><button aria-label="Image"><svg><use href="#img"/></svg></button><i class="sep"></i>
      <button aria-label="Button control"><svg><use href="#teal"/></svg></button><button aria-label="Text"><svg><use href="#edit"/></svg></button><button aria-label="Progress"><svg><use href="#bars"/></svg></button><button aria-label="Meter"><svg><use href="#clock"/></svg></button><button aria-label="Slider"><svg><use href="#slider"/></svg></button><button class="rtc">RTC</button><button aria-label="Film"><svg><use href="#film"/></svg></button><button aria-label="Icon"><svg><use href="#traffic"/></svg></button><button aria-label="Graph"><svg><use href="#chart"/></svg></button><button aria-label="Table"><svg><use href="#listbox"/></svg></button><button aria-label="Menu"><svg><use href="#lines"/></svg></button><button aria-label="QR code"><svg><use href="#qr"/></svg></button><button aria-label="Panel"><svg><use href="#darkbox"/></svg></button><button aria-label="Frame"><svg><use href="#listbox"/></svg></button><button aria-label="Globe"><svg><use href="#globe"/></svg></button><button aria-label="Rotate"><svg><use href="#rot"/></svg></button><button aria-label="Label"><svg><use href="#rect"/></svg></button><i class="sep"></i>
      <button aria-label="Style"><svg><use href="#line"/></svg></button><button aria-label="Sheet"><svg><use href="#listbox"/></svg></button><i class="sep"></i>
      <button aria-label="Brush"><svg><use href="#pen"/></svg></button><button aria-label="Brush 2"><svg><use href="#pen"/></svg></button><button aria-label="Line color"><svg><use href="#mark"/></svg></button><button class="dd" aria-label="Line colors"><svg><use href="#tri"/></svg></button><button aria-label="Fill color"><svg><use href="#bucket"/></svg></button><button class="dd" aria-label="Fill colors"><svg><use href="#tri"/></svg></button>
      <button class="ofl" aria-label="More"><svg><use href="#ofl"/></svg></button>
    </div>
  </div>

  <div class="barrow last">
    <div class="bar">
      <i class="grip"></i>
      <button aria-label="Front"><svg><use href="#lay1"/></svg></button><button aria-label="Back"><svg><use href="#lay2"/></svg></button><button aria-label="Forward"><svg><use href="#lay3"/></svg></button><button aria-label="Backward"><svg><use href="#lay3"/></svg></button><button aria-label="Top"><svg><use href="#lay1"/></svg></button><button aria-label="Bottom"><svg><use href="#lay2"/></svg></button>
      <button aria-label="Align left"><svg><use href="#alL"/></svg></button><button aria-label="Align top"><svg><use href="#alT"/></svg></button><button aria-label="Align right"><svg class="fx"><use href="#alL"/></svg></button><button aria-label="Align bottom"><svg class="fy"><use href="#alT"/></svg></button><button aria-label="Center"><svg><use href="#cenH"/></svg></button><button aria-label="Middle"><svg><use href="#cenV"/></svg></button><button aria-label="Space across"><svg><use href="#spH"/></svg></button><button aria-label="Space down"><svg><use href="#spV"/></svg></button><button aria-label="Box middle"><svg><use href="#boxV"/></svg></button><button aria-label="Box center"><svg><use href="#boxH"/></svg></button><button aria-label="Same width"><svg><use href="#wid"/></svg></button><button aria-label="Same height"><svg><use href="#hei"/></svg></button><button aria-label="Same size"><svg><use href="#all"/></svg></button><i class="sep"></i>
      <button aria-label="Lock"><svg><use href="#lock"/></svg></button><button aria-label="Unlock"><svg><use href="#unlock"/></svg></button><button aria-label="Hide"><svg><use href="#eyeoff"/></svg></button><button aria-label="Show"><svg><use href="#eye"/></svg></button><i class="sep"></i>
      <button aria-label="Zoom in"><svg><use href="#mag"/></svg></button><button aria-label="Zoom out"><svg><use href="#mag"/></svg></button><i class="sep"></i>
      <button aria-label="Grid"><svg><use href="#grid"/></svg></button><button class="on" aria-label="Snap"><svg><use href="#snap"/></svg></button>
      <button class="ofl" aria-label="More"><svg><use href="#ofl"/></svg></button>
    </div>
    <div class="bar">
      <i class="grip"></i><button aria-label="Find"><svg><use href="#find"/></svg></button><label class="w75" for="find">Find Content</label><span class="combo w54"><select id="find"><option></option></select></span><label class="w32" for="state">State</label><span class="combo w46"><select id="state"><option>0</option></select></span>
      <button class="ofl" aria-label="More"><svg><use href="#ofl"/></svg></button>
    </div>
  </div>

  <div class="work">
    <div class="left">
      <div class="upper">
        <section class="panel">
          <header class="phead"><i class="grip"></i><h2>Project</h2><button aria-label="Menu"><svg><use href="#tri"/></svg></button><button aria-label="Pin"><svg><use href="#pin"/></svg></button><button aria-label="Close"><svg><use href="#x"/></svg></button></header>
          <div class="pbox project">
            <ul class="tree">
              <li><svg class="i16"><use href="#proj"/></svg><span>tgp_room</span></li>
              <li class="l1 first"><i class="minus"></i><i class="dash"></i><svg class="i16"><use href="#foldo"/></svg><span>Screen Files</span></li>
              <li class="l2"><i class="elbow"></i><svg class="i16"><use href="#doc"/></svg><span class="sel">Screen0.tft</span></li>
              <li class="l1"><i class="dash long"></i><svg class="i16"><use href="#fold"/></svg><span>Image Files</span></li>
              <li class="l1"><i class="dash long"></i><svg class="i16"><use href="#fold"/></svg><span>Audio Files</span></li>
              <li class="l1 end"><i class="dash long"></i><svg class="i16"><use href="#fold"/></svg><span>Video file</span></li>
            </ul>
            <div class="preview"></div>
          </div>
        </section>
        <section class="editor">
          <div class="tabs">
            <svg class="tabshape" viewBox="0 0 170 21" aria-hidden="true"><path fill="#b9c9f2" stroke="#26399b" d="M6 20.500C14 18 18 4 28 3.500h56l2 3v14z"/><path fill="#fbdf8e" stroke="#3e5cab" d="M69 21C78 18 80 3 90 3.500h68q2 0 2 3V21"/></svg>
            <a class="t1" href="#start">Start Page</a><a class="t2" href="#screen0">Screen0</a><button aria-label="Close tab"><svg><use href="#x"/></svg></button>
            <span class="tabnav"><button aria-label="Previous tab"><svg viewBox="0 0 10 10"><path fill="none" stroke="#000" d="M6.500 1v8l-4-4z"/></svg></button><button aria-label="Next tab"><svg viewBox="0 0 10 10"><path fill="none" stroke="#000" d="M3.500 1v8l4-4z"/></svg></button><button aria-label="Close"><svg><use href="#x"/></svg></button></span>
          </div>
          <div class="frame">
            <div class="hruler"><span>0</span><span>100</span><span>200</span><span>300</span><span>400</span></div>
            <div class="vruler"><span>0</span><span>100</span><span>200</span><span>300</span><span>400</span></div>
            <div class="canvas"><p class="sid">Screen ID:0</p><div class="screen"><button class="tftbtn">Button</button></div></div>
            <div class="vscroll"></div><div class="hscroll"></div>
          </div>
        </section>
      </div>
      <section class="panel output">
        <header class="phead"><i class="grip"></i><h2>Output</h2></header>
        <div class="pbox"></div>
      </section>
      <section class="panel command">
        <header class="phead"><i class="grip"></i><h2>Command</h2></header>
        <div class="pbox">
          <table class="cmd"><thead><tr><th class="w30">In...</th><th class="w90">Time</th><th class="w70">Send/Rec...</th><th>Instruction</th></tr></thead><tbody><tr><td colspan="4">There are no items to show.</td></tr></tbody></table>
          <div class="cscroll"></div>
        </div>
      </section>
      <div class="btabs"><button><svg class="i16"><use href="#tabi"/></svg>Find</button><button class="cur"><svg class="i16"><use href="#tabi"/></svg>Command</button></div>
    </div>

    <div class="right">
      <section class="panel property">
        <header class="phead"><i class="grip"></i><h2>Property</h2><button aria-label="Menu"><svg><use href="#tri"/></svg></button><button aria-label="Pin"><svg><use href="#pin"/></svg></button><button aria-label="Close"><svg><use href="#x"/></svg></button></header>
        <div class="pbox">
          <div class="bar ptools"><button class="on" aria-label="Categorized"><svg><use href="#cat"/></svg></button><button aria-label="Alphabetical"><svg><use href="#az"/></svg></button><button aria-label="Pages"><svg><use href="#cards"/></svg></button><button class="q">?</button></div>
          <div class="plist">
            <table class="props">
              <colgroup><col class="gutter"><col class="key"><col></colgroup>
              <tbody><tr class="c"><th><i class="minus"></i></th><th colspan="2">Basic</th></tr>
              <tr class="g"><th></th><td>Name</td><td>Screen0</td></tr>
              <tr class="c"><th><i class="minus"></i></th><th colspan="2">Background</th></tr>
              <tr><th></th><td>Transparent</td><td>NO</td></tr>
              <tr><th></th><td>BkColor</td><td><i class="swatch"></i>0; 0; 0</td></tr>
              <tr><th></th><td>BkImage</td><td></td></tr>
              <tr><th></th><td>Size</td><td>Default</td></tr></tbody>
            </table>
          </div>
          <div class="pdesc"></div>
        </div>
      </section>
      <section class="panel layer">
        <header class="phead"><i class="grip"></i><h2>Layer</h2><button aria-label="Menu"><svg><use href="#tri"/></svg></button><button aria-label="Pin"><svg><use href="#pin"/></svg></button><button aria-label="Close"><svg><use href="#x"/></svg></button></header>
        <div class="pbox">
          <table class="layers">
            <thead><tr><th class="k"><svg class="i16"><use href="#eye"/></svg></th><th class="k"><svg class="i16"><use href="#lock"/></svg></th><th class="id">Control ID</th><th class="nm">Name</th><th></th></tr></thead>
            <tbody>
            <tr class="sel"><td><input type="checkbox" aria-label="Hide Button1"></td><td><input type="checkbox" aria-label="Lock Button1"></td><td>1</td><td>Button1</td><td></td></tr>
            <tr><td><input type="checkbox" aria-label="Hide Image1"></td><td><input type="checkbox" aria-label="Lock Image1"></td><td>2</td><td>Image1</td><td></td></tr>
            <tr><td><input type="checkbox" aria-label="Hide Text_Display1"></td><td><input type="checkbox" aria-label="Lock Text_Display1"></td><td>3</td><td>Text_Display1</td><td></td></tr>
            </tbody>
          </table>
        </div>
      </section>
    </div>
  </div>
  <footer class="status">Download to device</footer>
</main>

<div class="tip">Download</div>

<section class="dialog" role="dialog" aria-labelledby="dlgt">
  <header><h2 id="dlgt">Download Wizard(M)</h2><button aria-label="Close"><svg><use href="#wx"/></svg></button></header>
  <div class="filerow"><label for="df">Download File</label><input id="df" value="R-D1 card reader and display\sw\tgp_template\dciot_build\"><button>...</button></div>
  <div class="checks">
    <label><input type="checkbox" checked>Images</label><label><input type="checkbox" checked>Configration</label><label><input type="checkbox" checked>Fonts</label>
    <label><input type="checkbox" checked>Audio</label><label><input type="checkbox" checked>Video</label><label><input type="checkbox" checked>System Resource</label>
  </div>
  <div class="groups">
    <fieldset><legend>COM Download</legend><div class="upg"><label for="up1">upgraded</label><span class="dsel"><select id="up1"><option>921600</option></select><svg><use href="#chd"/></svg></span></div><button class="com">COM Download</button></fieldset>
    <fieldset><legend>SDCard Download</legend><button class="sd">SDCard download...</button></fieldset>
  </div>
  <div class="foot"><label><input type="checkbox">Advanced</label><button>Help</button></div>
</section>

<section class="explorer">
  <header class="etabs">
    <div class="etab"><svg class="i16"><use href="#yf"/></svg><h2>SD_PACKET</h2><button aria-label="Close tab"><svg><use href="#wx"/></svg></button></div>
    <button class="plus" aria-label="New tab"><svg viewBox="0 0 12 12"><path stroke="#fff" d="M6.500 1v11M1 6.500h11"/></svg></button>
    <div class="winbtns"><button aria-label="Minimize"><svg><use href="#wmin"/></svg></button><button aria-label="Maximize"><svg><use href="#wmax"/></svg></button><button aria-label="Close"><svg><use href="#wx"/></svg></button></div>
  </header>
  <nav class="enav">
    <button class="off" aria-label="Back"><svg class="i16"><use href="#left"/></svg></button><button class="off" aria-label="Forward"><svg class="i16"><use href="#right"/></svg></button><button aria-label="Up"><svg class="i16"><use href="#up"/></svg></button><button aria-label="Refresh"><svg class="i16"><use href="#ref"/></svg></button>
    <div class="crumbs"><svg class="i16"><use href="#mon"/></svg><svg class="i8"><use href="#chev"/></svg><a href="#documents">Documents</a><svg class="i8"><use href="#chev"/></svg><a href="#sd">SD_PACKET</a><svg class="i8"><use href="#chev"/></svg></div>
    <div class="search"><input aria-label="Search" placeholder="Search SD_PACKET"><svg><use href="#smag"/></svg></div>
  </nav>
  <div class="ecmd">
    <button class="wide new"><svg class="i16"><use href="#plusc"/></svg>New<svg class="i8"><use href="#chd"/></svg></button><i></i>
    <button aria-label="Cut"><svg class="i16"><use href="#ecut"/></svg></button><button aria-label="Copy"><svg class="i16"><use href="#ecopy"/></svg></button><button aria-label="Paste"><svg class="i16"><use href="#epaste"/></svg></button><button aria-label="Rename"><svg class="i16"><use href="#eren"/></svg></button><button aria-label="Share"><svg class="i16"><use href="#eshare"/></svg></button><button aria-label="Delete"><svg class="i16"><use href="#ebin"/></svg></button><i></i>
    <button class="wide sort"><svg class="i16"><use href="#esort"/></svg>Sort<svg class="i8"><use href="#chd"/></svg></button><button class="wide view"><svg class="i16"><use href="#eview"/></svg>View<svg class="i8"><use href="#chd"/></svg></button><i></i>
    <button aria-label="More"><svg class="i16" viewBox="0 0 16 16"><path fill="#eee" d="M0 7h3v3H0zM6.500 7h3v3h-3zM13 7h3v3h-3z"/></svg></button>
    <button class="wide det"><svg class="i16"><use href="#edet"/></svg>Details</button>
  </div>
  <div class="ebody">
    <aside>
      <ul>
        <li class="cur"><svg class="i16"><use href="#home"/></svg><a href="#h">Home</a></li>
        <li><svg class="i16"><use href="#gal"/></svg><a href="#g">Gallery</a></li>
        <li class="exp"><svg class="i8"><use href="#chev"/></svg><svg class="i16"><use href="#cloud"/></svg><a href="#o">OneDrive - Robotina d.o.o</a></li>
        <li class="rule"></li>
        <li><svg class="i16"><use href="#sdoc"/></svg><a href="#d">Documents</a><svg class="pinned"><use href="#spin"/></svg></li>
        <li><svg class="i16"><use href="#dl"/></svg><a href="#w">Downloads</a><svg class="pinned"><use href="#spin"/></svg></li>
        <li><svg class="i16"><use href="#pic"/></svg><a href="#p">Pictures</a><svg class="pinned"><use href="#spin"/></svg></li>
        <li><svg class="i16"><use href="#mus"/></svg><a href="#m">Music</a><svg class="pinned"><use href="#spin"/></svg></li>
        <li><svg class="i16"><use href="#vid"/></svg><a href="#v">Videos</a><svg class="pinned"><use href="#spin"/></svg></li>
        <li><svg class="i16"><use href="#desk"/></svg><a href="#k">Desktop</a><svg class="pinned"><use href="#spin"/></svg></li>
        <li><svg class="i16"><use href="#yf"/></svg><a href="#o1">output</a></li>
        <li><svg class="i16"><use href="#yf"/></svg><a href="#td">tgp_demo</a></li>
        <li><svg class="i16"><use href="#yf"/></svg><a href="#o2">output</a></li>
        <li><svg class="i16"><use href="#yf"/></svg><a href="#tt">tgp_template</a></li>
      </ul>
      <div class="escroll"></div>
    </aside>
    <div class="files">
      <svg class="sortmark"><use href="#chu"/></svg>
      <table>
        <thead><tr><th class="fn">Name</th><th class="fd">Date modified</th><th class="ft">Type</th><th class="fs">Size</th></tr></thead>
        <tbody>
        <tr class="foc"><td><div class="nmc"><svg class="i16"><use href="#yf"/></svg><span>private</span></div></td><td>26/06/2025 17:14</td><td>File folder</td><td></td></tr>
        <tr><td><div class="nmc"><svg class="i16"><use href="#txt"/></svg><span>!!!Copy [private] directory to the root dire...</span></div></td><td>26/06/2025 17:14</td><td>TXT File</td><td class="r">0 KB</td></tr>
        <tr><td><div class="nmc"><svg class="i16"><use href="#txt"/></svg><span>!!!直接复制private文件夹到SD卡根目录.txt</span></div></td><td>26/06/2025 17:14</td><td>TXT File</td><td class="r">0 KB</td></tr>
        </tbody>
      </table>
    </div>
  </div>
  <footer><span>3 items</span><i></i><button class="on" aria-label="Details view"><svg class="i16"><use href="#vlist"/></svg></button><button aria-label="Icon view"><svg class="i16"><use href="#vbig"/></svg></button></footer>
</section>

<div class="note n1"><svg viewBox="0 0 46 28"><path class="ln" d="M6 12v2q0 9 9 9h31"/><path class="hd" d="M6 0l5 14-5-2-5 2z"/></svg><p>1. Download to device</p></div>
<div class="note n2"><svg viewBox="0 0 46 28"><path class="ln" d="M6 12v2q0 9 9 9h31"/><path class="hd" d="M6 0l5 14-5-2-5 2z"/></svg><p>2. SDCard download...</p></div>
<div class="note n3"><svg viewBox="0 0 76 110"><path class="ln" d="M6 12v84q0 9 9 9h61"/><path class="hd" d="M6 0l5 14-5-2-5 2z"/></svg><p>3. Copy private folder on root of micro SD card</p></div>
</div>
</body>
</html>
```
FILE: styles.css
```css
* { box-sizing: border-box; }
body { margin: 0; background: #fff; color: #111; font: 12px/16px "Open Sans", "Noto Sans CJK SC", sans-serif; }
h1, h2, p, ul { margin: 0; padding: 0; font-size: 12px; font-weight: 400; list-style: none; }
button, input, select { font: inherit; color: inherit; margin: 0; padding: 0; border: 0; background: none; border-radius: 0; }
select { appearance: none; }
a { color: inherit; text-decoration: none; }
table { border-collapse: collapse; border-spacing: 0; }
th, td { padding: 0; text-align: left; font-weight: 400; }
svg { display: block; flex: none; }
.sprite { position: absolute; width: 0; height: 0; }
.i16 { width: 16px; height: 16px; }
.i8 { width: 8px; height: 8px; }
.desktop { position: relative; min-height: 100vh; }

/* IDE window */
.ide { margin-right: 175px; border: 1px solid #a3a6ad; background: linear-gradient(90deg, #a9bdf0, #b5c6f3 50%, #c2d1f6); }
.titlebar { display: flex; align-items: center; height: 30px; padding-left: 8px; gap: 6px; background: #f3f3f3; }
.winbtns { display: flex; margin-left: auto; }
.winbtns button { width: 46px; display: grid; place-items: center; height: 30px; }
.winbtns svg { width: 12px; height: 12px; }
.menubar { display: flex; align-items: center; height: 26px; padding-left: 3px; }
.menubar a { margin-left: 7px; margin-right: 8px; }
.menubar u { text-underline-offset: 2px; }
.grip { flex: none; width: 7px; height: 14px; background: repeating-linear-gradient(#3a55a5 0 2px, transparent 2px 4px) 3px 0 / 2px 100% no-repeat; }
.barrow { display: flex; gap: 5px; height: 26px; padding-left: 3px; }
.barrow.last { height: 25px; }
.bar { display: flex; align-items: center; height: 25px; background: linear-gradient(#e0eafc, #cbdaf8 45%, #9db5e8); border-bottom: 1px solid #3f62ae; border-radius: 3px 0 0 3px; }
.bar button { flex: none; width: 22px; height: 22px; display: grid; place-items: center; }
.bar button svg { width: 16px; height: 16px; }
.bar .on { background: linear-gradient(#fbcf92, #f5b45e); border: 1px solid #1b1f80; }
.bar .sep { flex: none; width: 6px; height: 15px; background: linear-gradient(90deg, transparent 2px, #6f8fd4 2px 3px, #f4f8ff 3px 4px, transparent 4px); }
.bar .tight { width: 3px; }
.bar .ofl { width: 11px; height: 25px; margin-left: 2px; align-self: flex-start; background: linear-gradient(#84a3e6, #2c4596); align-items: end; padding-bottom: 1px; }
.bar .ofl svg { width: 10px; height: 14px; }
.bar .num { color: #3a5ff0; font-size: 11px; }
.bar .aa { font: bold 14px/16px "Liberation Sans", sans-serif; }
.bar .rtc { font: bold 8px/16px "Liberation Sans", sans-serif; }
.bar .load { background: linear-gradient(#fff3c4, #fbe08a); align-content: center; }
.bar .load span { font: bold 6px/7px "Liberation Sans", sans-serif; }
.bar .load svg { width: 14px; height: 12px; }
.bar .dd { width: 11px; }
.bar .dd svg { width: 8px; height: 8px; }
.bar .tx { display: flex; align-items: center; justify-content: center; gap: 3px; white-space: nowrap; }
.bar .small { font-size: 11px; }
.bar label { flex: none; white-space: nowrap; text-align: center; }
.bar .dim { color: #8f97ab; }
.lang { width: 37px; }
.w27 { width: 27px; } .w30 { width: 30px; } .w32 { width: 32px; } .w46 { width: 46px; } .w54 { width: 54px; } .w59 { width: 59px; }
.w70 { width: 70px; } .w75 { width: 75px; } .w90 { width: 90px; } .w92 { width: 92px; }
.bar .w80 { width: 80px; } .bar .w82 { width: 82px; }
.combo { flex: none; position: relative; height: 20px; }
.combo select { width: 100%; height: 20px; padding-left: 3px; border: 1px solid #fff; background: linear-gradient(#dbe6fb, #a9bee9) right / 11px 100% no-repeat #fff; }
.combo::after { content: ""; position: absolute; right: 4px; top: 9px; border: 3px solid transparent; border-top-color: #000; border-bottom: 0; }
.blight { width: 45px; height: 22px; padding-left: 2px; background: #f0f0f0; border: 1px solid #9aaddb; color: #777; }
.fx { transform: scaleX(-1); } .fy { transform: scaleY(-1); }

.work { display: grid; grid-template-columns: minmax(0, 797fr) minmax(0, 473fr); gap: 4px; background: #dce8fa; }
.left, .right, .panel, .editor { display: flex; flex-direction: column; min-width: 0; }
.upper { display: grid; grid-template-columns: 250px minmax(0, 1fr); gap: 4px; margin-bottom: 4px; }
.phead { display: flex; flex: none; align-items: center; height: 25px; padding-left: 3px; padding-right: 4px; background: linear-gradient(#dfe9fb, #cbd9f6 50%, #9bb1e4); }
.phead .grip { height: 18px; }
.phead h2 { flex: 1; padding-left: 4px; }
.phead button, .tabs button { width: 16px; height: 16px; display: grid; place-items: center; }
.phead svg, .tabs button svg { width: 10px; height: 10px; }
.pbox { flex: 1; border: 1px solid #26339b; background: #fff; min-height: 0; }
.project { display: flex; flex-direction: column; padding: 1px; background: #f0f0f0; }
.tree { flex: none; height: 435px; border: 1px solid #777; border-right-color: #ddd; border-bottom-color: #ddd; background: #fff; }
.tree li { display: flex; align-items: center; height: 18px; padding-left: 4px; }
.tree span { padding: 0 2px; margin-left: 2px; }
.tree li.l1 { padding-left: 8px; }
.tree li.l2 { padding-left: 31px; }
.tree .sel { background: #f0f0f0; }
.minus { flex: none; display: block; width: 9px; height: 9px; border: 1px solid #8c92a0; background: linear-gradient(#3a55a5, #3a55a5) center / 5px 1px no-repeat #fff; }
.dash { width: 6px; border-top: 1px dotted #777; }
.dash.long { width: 11px; height: 18px; margin-left: 4px; border: 0; border-left: 1px dotted #777; background: repeating-linear-gradient(90deg, #777 0 1px, transparent 1px 2px) left center / 100% 1px no-repeat; }
.end .dash.long { height: 9px; align-self: flex-start; background-position: left bottom; }
.elbow { width: 11px; height: 10px; align-self: flex-start; border-left: 1px dotted #777; border-bottom: 1px dotted #777; }
.preview { flex: 1; min-height: 107px; margin-top: 2px; border: 1px solid #777; border-width: 2px 0 0 1px; background: #f0f0f0; }

.tabs { display: flex; align-items: center; height: 20px; position: relative; padding: 3px 0 0 25px; background: linear-gradient(#d3dffa, #fff); }
.tabshape { position: absolute; left: 0; top: 0; width: 170px; height: 21px; }
.tabs a { position: relative; white-space: nowrap; }
.t1 { width: 65px; }
.t2 { font-weight: 700; width: 52px; }
.tabs > button { position: relative; }
.tabnav { display: flex; margin-left: auto; align-self: flex-start; }
.tabs .tabnav button { width: 14px; height: 12px; }
.frame { flex: 1; display: grid; grid-template: 19px minmax(513px, 1fr) 17px / 19px minmax(0, 1fr) 17px; border: 1px solid #4a66b0; box-shadow: inset 0 0 0 1px #fbdf8e; padding: 1px; background: #f0f0f0; }
.hruler { grid-column: 1 / 4; display: flex; padding-left: 39px; height: 17px; background: #f2f3fa; border-bottom: 1px solid #9aa3bb; overflow: hidden; }
.hruler span { flex: none; width: 100px; padding-left: 2px; font-size: 10px; line-height: 12px; color: #555e78; border-left: 1px solid #97a1bd; background: repeating-linear-gradient(90deg, #97a1bd 0 1px, transparent 1px 10px) 9px bottom / 100% 6px no-repeat; }
.hruler span:last-child { width: 80px; }
.vruler { display: flex; flex-direction: column; padding-top: 20px; width: 17px; background: #f2f3fa; border-right: 1px solid #9aa3bb; overflow: hidden; }
.vruler span { flex: 0 0 100px; writing-mode: vertical-rl; transform: rotate(180deg); text-align: right; padding-bottom: 1px; padding-left: 4px; font-size: 10px; line-height: 12px; color: #46506e; border-bottom: 1px solid #97a1bd; background: repeating-linear-gradient(0deg, #97a1bd 0 1px, transparent 1px 10px) left -9px / 6px 100% no-repeat; }
.vruler span:last-child { flex-basis: 80px; }
.canvas { padding: 0 2px 11px 19px; background: #98a295; display: flex; flex-direction: column; }
.sid { height: 19px; padding-top: 2px; font: bold 14px/16px "Liberation Sans", sans-serif; color: #4c504c; }
.screen { flex: 1; background: #000; border: 1px solid #333; padding: 127px 143px 0 144px; }
.tftbtn { width: 100%; height: 48px; border: 1px solid #7a7a7a; color: #fff; font: 44px/46px "Liberation Serif", serif; }
.vscroll { background: linear-gradient(#888, #888) 9px 17px / 2px 490px no-repeat #f0f0f0; }
.hscroll { grid-column: 2; background: linear-gradient(#888, #888) 17px 8px / 460px 2px no-repeat #f0f0f0; }

.output { height: 185px; }
.command { height: 179px; padding-top: 10px; background: linear-gradient(#f0f0f0 6px, #dce8fa 6px); }
.command .pbox { display: flex; flex-direction: column; }
.cmd { width: 100%; table-layout: fixed; }
.cmd th { height: 23px; padding: 0 0 3px 3px; background: #f0f0f0; border-bottom: 2px solid #c8c8c8; border-right: 1px solid #a8a8a8; white-space: nowrap; }
.cmd th:last-child { border-right: 0; }
.cmd td { text-align: center; padding-top: 5px; }
.cscroll { height: 16px; margin-top: auto; background: linear-gradient(#888, #888) 17px 7px / 720px 2px no-repeat #f0f0f0; }
.btabs { display: flex; height: 23px; padding-left: 2px; align-items: flex-start; background: linear-gradient(#f8faff, #d3dffa); }
.btabs button { display: flex; align-items: center; gap: 3px; height: 21px; padding: 0 3px 0 4px; border: 1px solid #3e5cab; border-top: 0; border-radius: 0 0 3px 3px; background: linear-gradient(#a9bdf0, #dde8fc); }
.btabs .cur { background: linear-gradient(#f5c47c, #fde4bb); }
.status { height: 20px; padding: 2px; background: #f0f0f0; }

.property { margin-bottom: 4px; }
.property .pbox { display: flex; flex-direction: column; background: #f0f0f0; padding: 0 1px 1px; }
.ptools { height: 26px; padding-left: 3px; border-radius: 0; }
.bar .q { color: #8a96ba; font: bold 18px/20px "Liberation Sans", sans-serif; }
.ptools .on svg { width: 18px; height: 18px; }
.plist { height: 435px; border-top: 1px solid #999; border-bottom: 1px solid #999; background: #fff; }
.props { width: 100%; table-layout: fixed; }
.gutter { width: 14px; }
.key { width: 222px; }
.props th:first-child { background: #cacaca; }
.props tr { height: 19px; }
.props td { padding-left: 3px; border-bottom: 1px solid #c8c8c8; line-height: 17px; }
.props td:nth-child(2) { border-right: 1px solid #c8c8c8; }
.props .c th { background: #cacaca; font-weight: 700; color: #777; padding-left: 3px; line-height: 17px; }
.props .c th:first-child { padding: 0 2px; }
.props .g td { color: #777; }
.swatch { display: inline-block; width: 20px; height: 16px; margin: 0 7px 0 -2px; background: #000; vertical-align: top; }
.pdesc { height: 57px; margin-top: 3px; border: 1px solid #999; }
.layer { flex: 1; }
.layers { width: 100%; table-layout: fixed; }
.layers thead th { height: 23px; background: #f0f0f0; border-bottom: 3px solid #ccc; border-right: 1px solid #a0a0a0; padding: 0 0 3px 3px; line-height: 16px; }
.layers th:last-child { border-right: 0; }
.layers .k { width: 24px; } .layers .id { width: 81px; } .layers .nm { width: 150px; }
.layers thead th.k { padding: 2px 0 0 3px; }
.layers td { height: 20px; border-bottom: 1px solid #e6e6e0; padding-left: 3px; }
.layers td:first-child, .layers td:last-child { background: #fff; }
.layers td:last-child { border: 0; }
.layers .sel td { background: #f0f0f0; }
.layers .sel td:first-child, .layers .sel td:last-child { background: #fff; }
.layers input { display: block; appearance: none; width: 12px; height: 12px; border: 1px solid #d8d8d8; }

.tip { position: absolute; left: 467px; top: 95px; width: 70px; height: 18px; padding: 0 6px; line-height: 18px; background: #f9f9f9; border-radius: 3px; color: #777; white-space: nowrap; box-shadow: 1px 2px 3px #0006; }

/* Download dialog */
.dialog { position: absolute; left: 350px; top: 430px; width: 485px; padding-bottom: 10px; border: 1px solid #8a8d92; background: #f0f0f0; font-size: 11px; box-shadow: 0 2px 6px #0003; }
.dialog header { display: flex; justify-content: space-between; align-items: center; height: 25px; padding: 0 9px 0 3px; background: #f3f3f3; }
.dialog header svg { width: 12px; height: 12px; }
.filerow { display: flex; align-items: center; gap: 7px; margin: 24px 13px 0 28px; }
.filerow label { width: 72px; white-space: nowrap; text-align: right; }
.filerow input { flex: 1; min-width: 0; height: 24px; padding: 3px 4px 6px 5px; color: #fff; font-size: 10px; line-height: 13px; border-bottom: 2px solid #3a66c4; background: linear-gradient(#4a7bd0, #4a7bd0) content-box no-repeat, #fff; }
.dialog button { background: #fdfdfd; border: 1px solid #3a72c4; border-radius: 4px; }
.dialog header button { background: none; border: 0; }
.dialog .filerow button { width: 61px; height: 21px; border-color: #ccc; }
.checks { display: grid; grid-template-columns: 154px 159px 1fr; grid-auto-rows: 32px; margin: 6px 0 0 26px; }
.checks label, .foot label { display: flex; align-items: center; gap: 2px; }
.dialog input[type=checkbox] { appearance: none; width: 13px; height: 13px; border: 1px solid #666; border-radius: 3px; background: #fafafa; display: grid; place-items: center; }
.dialog input[type=checkbox]:checked { background: #3a66b8; border-color: #3a66b8; }
.dialog input[type=checkbox]:checked::before { content: ""; width: 6px; height: 3px; border: solid #fff; border-width: 0 0 1px 1px; rotate: -45deg; margin-top: -2px; }
.groups { display: grid; grid-template-columns: 1fr 1fr; gap: 25px; margin: 8px 11px 0; }
.dialog fieldset { margin: 0; min-width: 0; border: 1px solid #dcdcdc; padding: 0 29px 0 36px; height: 102px; }
.dialog fieldset + fieldset { padding: 0 25px 0 28px; }
.dialog legend { margin-left: -30px; padding: 0 1px; }
.dialog fieldset + fieldset legend { margin-left: -22px; }
.upg { display: flex; justify-content: flex-end; align-items: center; gap: 12px; margin: 8px -13px 6px 0; }
.dsel { position: relative; width: 84px; height: 21px; }
.dsel select { width: 100%; height: 21px; padding-left: 3px; background: #fff; border: 1px solid #ccc; border-radius: 2px; }
.dsel svg { position: absolute; right: 3px; top: 5px; width: 12px; height: 12px; color: #555; }
.com { width: 100%; height: 39px; }
.sd { width: 100%; height: 60px; margin-top: 13px; }
.foot { display: flex; justify-content: space-between; margin: 4px 11px 0 26px; align-items: flex-start; }
.foot label { margin-top: 11px; }
.dialog .foot button { width: 75px; height: 29px; }

/* Explorer window */
.explorer { position: absolute; left: 540px; right: 0; top: 830px; bottom: 0; min-width: 700px; min-height: 624px; display: flex; flex-direction: column; border: 1px solid #77797c; background: #232323; color: #fff; }
.etabs { display: flex; height: 39px; padding-left: 8px; background: #141414; }
.etab { display: flex; align-items: center; align-self: flex-end; gap: 10px; width: 240px; height: 32px; padding: 0 15px 0 9px; background: #292929; border-radius: 8px 8px 0 0; }
.etab h2 { flex: 1; font-weight: 600; font-size: 11px; }
.etab button svg, .plus svg { width: 12px; height: 12px; }
.plus { width: 44px; height: 46px; display: grid; place-items: center; }
.etabs .winbtns button { height: 28px; }
.enav { display: flex; align-items: center; height: 49px; padding: 0 11px 0 3px; background: #292929; border-bottom: 1px solid #3d3d3d; font-size: 13px; }
.enav > button { width: 48px; display: grid; place-items: center; }
.enav .off { color: #6e6e6e; }
.crumbs { flex: 1; display: flex; align-items: center; height: 32px; margin-left: 6px; margin-right: 8px; padding-left: 13px; gap: 18px; background: #363636; border-radius: 4px; }
.search { display: flex; align-items: center; width: 195px; height: 32px; padding: 0 13px 0 15px; background: #363636; border-radius: 4px; }
.search input { flex: 1; min-width: 0; }
.search input::placeholder { color: #c8c8c8; opacity: 1; }
.search svg { width: 12px; height: 12px; }
.ecmd { display: flex; align-items: center; height: 47px; padding-top: 3px; border-bottom: 1px solid #3d3d3d; }
.ecmd button { width: 48px; display: flex; justify-content: center; align-items: center; }
.ecmd > i { width: 1px; height: 31px; margin: 0 2px; background: #3a3a3a; }
.ecmd .wide { gap: 8px; width: auto; }
.ecmd .i8 { margin-left: -3px; color: #aaa; }
.ecmd .new { width: 93px; padding-left: 3px; }
.ecmd .sort { width: 88px; }
.ecmd .view { width: 90px; }
.ecmd .det { margin-left: auto; margin-right: 20px; }
.ebody { flex: 1; display: flex; min-height: 0; }
aside { flex: none; display: flex; width: 233px; border-right: 1px solid #383838; }
aside ul { width: 211px; margin: 6px 0 0 2px; }
aside li { display: flex; align-items: center; gap: 5px; height: 32px; padding: 0 2px 0 32px; }
aside li a { flex: 1; white-space: nowrap; }
aside .cur { background: #3c3c3c; border-radius: 2px; }
aside .exp { padding-left: 10px; }
aside .exp .i8 { margin-right: 9px; }
aside .rule { height: 32px; margin: 0 8px; padding: 0; background: linear-gradient(#404040, #404040) center / 100% 1px no-repeat; }
.pinned { width: 12px; height: 12px; }
.escroll { width: 2px; height: 175px; margin: 17px 0 0 8px; background: #9a9a9a; }
.files { flex: 1; min-width: 0; padding-left: 14px; padding-right: 59px; position: relative; }
.sortmark { position: absolute; left: 144px; top: 0; width: 8px; height: 8px; color: #999; }
.files table { width: 100%; table-layout: fixed; border-collapse: separate; color: #dedede; }
.files th { height: 25px; padding-left: 6px; border-right: 1px solid #5c5c5c; }
.files .fn { padding-left: 17px; }
.fd { width: 144px; } .ft { width: 120px; } .fs { width: 80px; }
.files td { height: 28px; padding-left: 6px; }
.files td:first-child { padding-left: 5px; color: #fff; white-space: nowrap; }
.files tbody::before { content: ""; display: block; height: 5px; }
.foc { outline: 1px solid #fff; outline-offset: -2px; }
.nmc { display: flex; align-items: center; gap: 4px; }
.files .r { text-align: right; padding-right: 7px; }
.explorer footer { display: flex; align-items: center; height: 24px; padding-left: 14px; background: #272727; color: #ccc; }
.explorer footer i { width: 1px; height: 12px; margin-left: 7px; background: #fff; }
.explorer footer button { width: 24px; height: 24px; display: grid; place-items: center; }
.explorer footer i + button { margin-left: auto; }
.explorer footer .on { background: #555; border: 1px solid #777; }
.explorer footer button:last-child { margin-right: 4px; }

/* Step notes */
.note { position: absolute; border: 1px solid #d6b656; border-radius: 5px; background: #fff0cc; color: #111; }
.note p { padding: 0 6px; font: 14px/29px "DejaVu Sans Mono", monospace; white-space: nowrap; }
.note svg { position: absolute; right: calc(100% + 1px); overflow: visible; }
.note .ln { fill: none; stroke: #d6b656; stroke-width: 3; }
.note .hd { fill: #d6b656; }
.n1, .n2 { width: 230px; }
.n1 svg, .n2 svg { width: 46px; height: 28px; top: -9px; }
.n1 { left: 510px; top: 90px; }
.n2 { left: 779px; top: 670px; }
.n3 { left: 901px; top: 1100px; width: 430px; border-radius: 7px; }
.n3 p { line-height: 49px; }
.n3 svg { width: 76px; height: 110px; top: -81px; }
```
